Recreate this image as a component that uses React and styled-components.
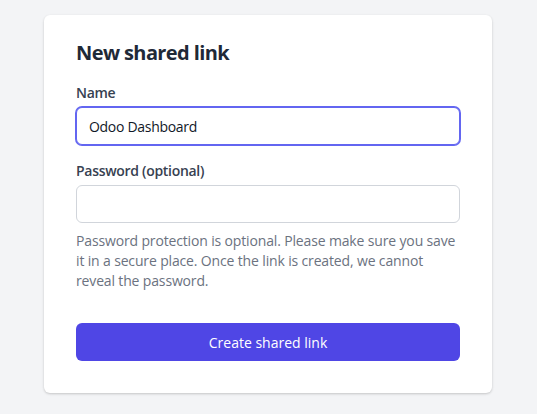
import styled, { createGlobalStyle } from 'styled-components';

const GlobalStyle = createGlobalStyle`
    html, body {
        margin: 0;
        padding: 0;
        background: #f3f4f6;
        font-family: "Open Sans", "Noto Sans", sans-serif;
        letter-spacing: -0.3px;
        -webkit-font-smoothing: antialiased;
    }
    * {
        box-sizing: border-box;
    }
`;

const Page = styled.div`
    min-height: 414px;
    padding: 15px 45px 0 44px;
`;

const Card = styled.div`
    width: 448px;
    background: #ffffff;
    border-radius: 6px;
    box-shadow: 0 1px 3px rgba(0, 0, 0, 0.12), 0 1px 2px rgba(0, 0, 0, 0.08);
    padding: 24px 32px 32px;
`;

const Title = styled.h2`
    margin: 0 0 16px;
    font-size: 20px;
    line-height: 28px;
    font-weight: 700;
    letter-spacing: -0.6px;
    color: #1f2937;
`;

const Field = styled.div`
    display: flex;
    flex-direction: column;
    gap: 4px;
    & + & {
        margin-top: 16px;
    }
`;

const Label = styled.label`
    font-size: 14px;
    line-height: 20px;
    font-weight: 600;
    color: #374151;
`;

const Input = styled.input`
    width: 100%;
    height: 38px;
    padding: 0 12px;
    font-family: inherit;
    font-size: 14px;
    letter-spacing: inherit;
    color: #111827;
    background: #fff;
    border: 1px solid ${(p) => (p.$focused ? '#6366f1' : '#d1d5db')};
    box-shadow: ${(p) => (p.$focused ? '0 0 0 1px #6366f1' : 'none')};
    border-radius: 6px;
    outline: none;
`;

const Hint = styled.p`
    margin: 4px 0 0;
    font-size: 14px;
    line-height: 20px;
    letter-spacing: -0.15px;
    color: #6b7280;
`;

const Button = styled.button`
    display: block;
    width: 100%;
    height: 38px;
    margin-top: 32px;
    border: none;
    border-radius: 6px;
    background: #4f46e5;
    color: #ffffff;
    font-family: inherit;
    font-size: 14px;
    font-weight: 500;
    letter-spacing: 0;
    cursor: pointer;
`;

const App = () => {
    return (
        <>
            <GlobalStyle />
            <Page>
                <Card>
                    <Title>New shared link</Title>
                    <Field>
                        <Label>Name</Label>
                        <Input $focused defaultValue="Odoo Dashboard" />
                    </Field>
                    <Field>
                        <Label>Password (optional)</Label>
                        <Input type="password" />
                        <Hint>
                            Password protection is optional. Please make sure you save it in a secure place. Once the
                            link is created, we cannot reveal the password.
                        </Hint>
                    </Field>
                    <Button type="button">Create shared link</Button>
                </Card>
            </Page>
        </>
    );
};

export default App;
